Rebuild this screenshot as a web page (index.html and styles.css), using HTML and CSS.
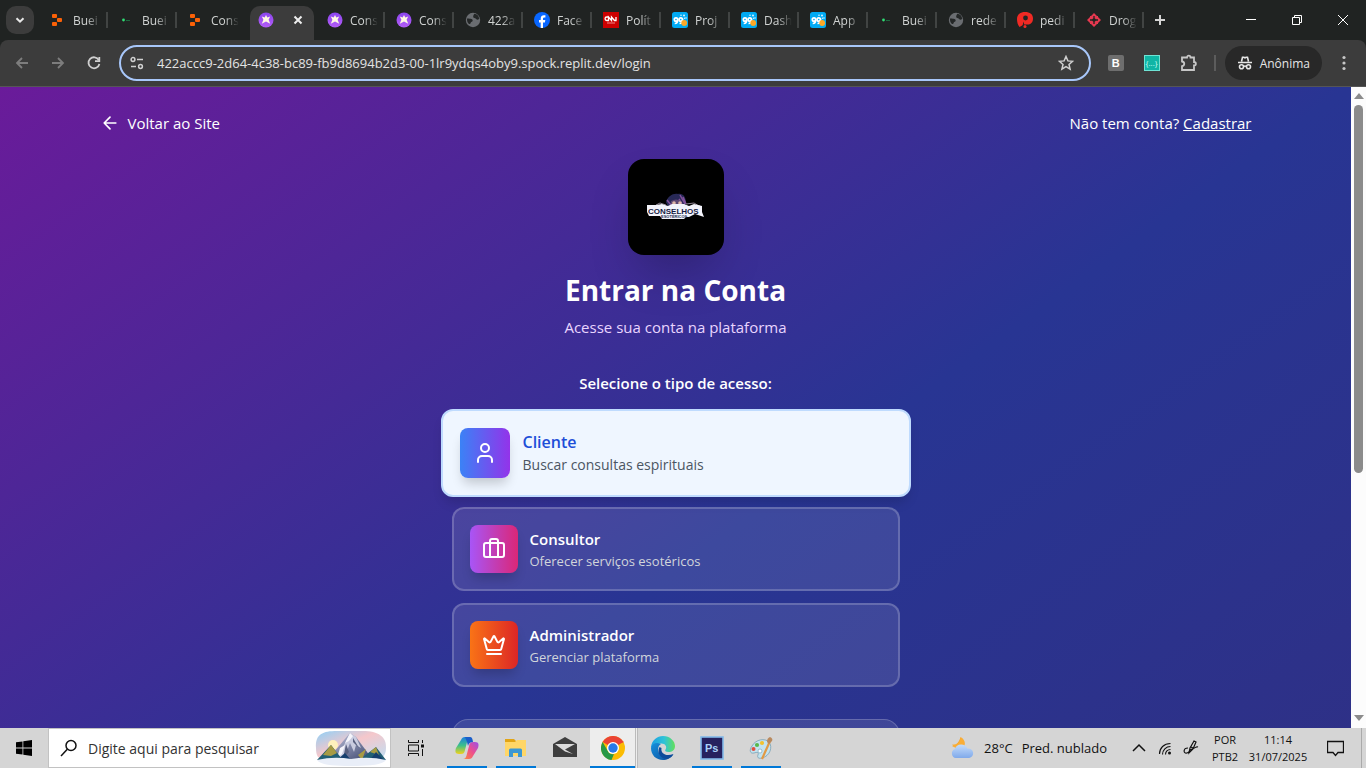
FILE: index.html
```html
<!DOCTYPE html>
<html lang="pt-BR">
<head>
<meta charset="utf-8">
<meta name="viewport" content="width=device-width, initial-scale=1">
<title>Entrar na Conta</title>
<link rel="stylesheet" href="styles.css">
</head>
<body>
<svg class="defs" aria-hidden="true">
  <defs>
    <linearGradient id="g-purple" x1="0" y1="0" x2="0" y2="1"><stop offset="0" stop-color="#8b45ee"/><stop offset="1" stop-color="#b35cf7"/></linearGradient>
    <linearGradient id="g-sky" x1="0" y1="0" x2="1" y2="1"><stop offset="0" stop-color="#8fd0f7"/><stop offset=".45" stop-color="#f5c7cb"/><stop offset="1" stop-color="#bfe0f5"/></linearGradient>
    <linearGradient id="g-rock" x1="0" y1="0" x2="1" y2="1"><stop offset="0" stop-color="#c9cbe4"/><stop offset="1" stop-color="#37426a"/></linearGradient>
    <linearGradient id="g-cop1" x1="0" y1="0" x2="0" y2="1"><stop offset="0" stop-color="#1b7fe0"/><stop offset=".5" stop-color="#3cc08a"/><stop offset="1" stop-color="#f2d21b"/></linearGradient>
    <linearGradient id="g-cop2" x1="1" y1="0" x2="0" y2="1"><stop offset="0" stop-color="#9b50e8"/><stop offset=".5" stop-color="#ee4f8c"/><stop offset="1" stop-color="#fb8a3c"/></linearGradient>
    <linearGradient id="g-edge1" x1="0" y1="0" x2="1" y2="0"><stop offset="0" stop-color="#1b9de2"/><stop offset=".55" stop-color="#2fc3d8"/><stop offset="1" stop-color="#63e05a"/></linearGradient>
    <linearGradient id="g-edge2" x1="0" y1="0" x2="1" y2="1"><stop offset="0" stop-color="#1690dc"/><stop offset="1" stop-color="#0b4f9e"/></linearGradient>
    <linearGradient id="g-cloud" x1="0" y1="0" x2="0" y2="1"><stop offset="0" stop-color="#c4dcfb"/><stop offset="1" stop-color="#7fa9ea"/></linearGradient>
    <symbol id="i-replit" viewBox="0 0 16 16"><g fill="#fb6107"><rect x="2" y="2" width="5" height="4" rx="1"/><rect x="7" y="6" width="5" height="4" rx="1"/><rect x="2" y="10" width="5" height="4" rx="1"/></g></symbol>
    <symbol id="i-dash" viewBox="0 0 16 16"><circle cx="4.500" cy="8" r="1.400" fill="#2fdc74"/><path d="M7 8.500h4" stroke="#1f6a3f" stroke-width="1"/></symbol>
    <symbol id="i-star" viewBox="0 0 16 16"><circle cx="8" cy="8" r="7.500" fill="url(#g-purple)"/><path d="M8 3 9.300 5.500 12.200 4.500 10.600 7.800 12.200 11.800 8 9.600 3.800 11.800 5.400 7.800 3.800 4.500 6.700 5.500z" fill="#fff8e4"/></symbol>
    <symbol id="i-globe" viewBox="0 0 16 16"><circle cx="8" cy="8" r="7.200" fill="#6a6d71"/><path d="M2 6.500c2.500.2 5.500 0 5.700 2 .1 1.400-1.700 1-2 2.300-.2 1-.8 1.500-1.700 1.200C2.500 11 1.800 8.500 2 6.500zM9.200 1.800c3 .3 4.600 2.200 5 5-1 1.300-2.500 1-3.300 0-.8-1-2.400-.5-2.700-1.800-.2-1.200.7-2 1-3.200z" fill="#242727"/></symbol>
    <symbol id="i-fb" viewBox="0 0 16 16"><circle cx="8" cy="8" r="8" fill="#0866ff"/><path d="M6.700 16v-5.500H5V8h1.700V6.800C6.700 4.300 7.900 3.200 10 3.200c.6 0 1.100.1 1.400.1v2.200h-1C9.300 5.500 9 6 9 7v1h2.300l-.4 2.500H9V16z" fill="#fff"/></symbol>
    <symbol id="i-cnn" viewBox="0 0 16 16"><rect width="16" height="16" fill="#c00"/><path d="M5 5H3.800a1.700 1.700 0 0 0 0 3.500H5.500V5l3 3.500V5l3 3.500h1.500V5" fill="none" stroke="#fff" stroke-width="1.300"/><path d="M4 11h8" stroke="#f08a8a"/></symbol>
    <symbol id="i-99" viewBox="0 0 16 16"><rect width="16" height="16" rx="2.500" fill="#00aaf4"/><g fill="none" stroke="#fff" stroke-width="1.700"><circle cx="4" cy="7.500" r="1.700"/><path d="M5.700 7.500c0 3-1 4-3 4"/><circle cx="8.800" cy="7.500" r="1.700"/><path d="M10.500 7.500c0 3-1 4-3 4"/></g><circle cx="12.200" cy="11" r="2.900" fill="#fca726"/><g fill="#d9f3ff"><circle cx="9" cy="3.200" r=".8"/><circle cx="12" cy="3.500" r="1"/><circle cx="14" cy="6" r=".8"/><circle cx="12.500" cy="6.300" r=".7"/></g></symbol>
    <symbol id="i-pede" viewBox="0 0 16 16"><path d="M8 0c5 0 8 2.300 8 6.500 0 4-2.500 6-5.500 6H7L2.500 15C.8 13 0 10 0 7 0 2.500 3.500 0 8 0z" fill="#f02a24"/><circle cx="8.500" cy="6" r="2.400" fill="#222524"/><path d="M6.500 9.500 5 16h3z" fill="#222524"/><circle cx="8" cy="14.500" r="1.500" fill="#f02a24"/></symbol>
    <symbol id="i-drog" viewBox="0 0 16 16"><path d="M8 1l3 3h1v1l3 3-3 3v1h-1l-3 3-3-3H4v-1L1 8l3-3V4h1z" fill="#e5384f"/><path d="M8 4v8M4 8h8" stroke="#202322" stroke-width="1.300"/><circle cx="8" cy="8" r="1.800" fill="#202322"/></symbol>
  </defs>
</svg>

<header class="browser">
  <nav class="tabstrip" aria-label="Abas">
    <button class="tab-search" aria-label="Pesquisar abas"><svg viewBox="0 0 12 12"><path d="M2.500 4.200 6 7.700l3.500-3.500"/></svg></button>
    <div class="tabs">
      <button class="tab"><svg><use href="#i-replit"/></svg><span>Buei</span></button>
      <button class="tab"><svg><use href="#i-dash"/></svg><span>Buei</span></button>
      <button class="tab tab-last"><svg><use href="#i-replit"/></svg><span>Cons</span></button>
      <button class="tab tab-active" aria-label="Conselhos, fechar aba"><svg><use href="#i-star"/></svg><svg class="close" viewBox="0 0 16 16"><path d="M4.500 4.500l7 7M11.500 4.500l-7 7"/></svg></button>
      <button class="tab"><svg><use href="#i-star"/></svg><span>Cons</span></button>
      <button class="tab"><svg><use href="#i-star"/></svg><span>Cons</span></button>
      <button class="tab"><svg><use href="#i-globe"/></svg><span>422a</span></button>
      <button class="tab"><svg><use href="#i-fb"/></svg><span>Face</span></button>
      <button class="tab"><svg><use href="#i-cnn"/></svg><span>Polít</span></button>
      <button class="tab"><svg><use href="#i-99"/></svg><span>Proj</span></button>
      <button class="tab"><svg><use href="#i-99"/></svg><span>Dash</span></button>
      <button class="tab"><svg><use href="#i-99"/></svg><span>App</span></button>
      <button class="tab"><svg><use href="#i-dash"/></svg><span>Buei</span></button>
      <button class="tab"><svg><use href="#i-globe"/></svg><span>rede</span></button>
      <button class="tab"><svg><use href="#i-pede"/></svg><span>pedi</span></button>
      <button class="tab"><svg><use href="#i-drog"/></svg><span>Drog</span></button>
    </div>
    <button class="new-tab" aria-label="Nova aba"><svg viewBox="0 0 16 16"><path d="M8 3v10M3 8h10"/></svg></button>
    <div class="window-controls">
      <button aria-label="Minimizar"><svg viewBox="0 0 12 12"><path d="M1 5.500h10"/></svg></button>
      <button aria-label="Restaurar"><svg viewBox="0 0 12 12"><path d="M1.500 3.500h7v7h-7zM3.500 3.500v-2h7v7h-2"/></svg></button>
      <button aria-label="Fechar"><svg viewBox="0 0 12 12"><path d="M1 1l10 10M11 1 1 11"/></svg></button>
    </div>
  </nav>
  <div class="toolbar">
    <button class="nav-button dim" aria-label="Voltar"><svg viewBox="0 0 16 16"><path d="M14 8H3M8 3 3 8l5 5"/></svg></button>
    <button class="nav-button dim" aria-label="Avançar"><svg viewBox="0 0 16 16"><path d="M2 8h11M8 3l5 5-5 5"/></svg></button>
    <button class="nav-button" aria-label="Recarregar"><svg viewBox="0 0 16 16"><path d="M12.800 5A5.500 5.500 0 1 0 13.400 9"/><path d="M13.300 2v4.200H9"/></svg></button>
    <label class="address">
      <svg class="site-icon" viewBox="0 0 16 16"><circle cx="4" cy="4.500" r="1.900"/><path d="M8 4.500h6M2 11.500h5"/><circle cx="11.500" cy="11.500" r="1.900"/></svg>
      <input type="text" aria-label="Endereço" value="422accc9-2d64-4c38-bc89-fb9d8694b2d3-00-1lr9ydqs4oby9.spock.replit.dev/login">
      <svg class="site-icon" viewBox="0 0 16 16"><path d="M8 1.500l1.900 4.400 4.700.4-3.600 3.100 1.100 4.700L8 11.600l-4.100 2.500L5 9.400 1.400 6.300l4.700-.4z"/></svg>
    </label>
    <button class="ext ext-b" aria-label="Extensão B">B</button>
    <button class="ext ext-code" aria-label="Extensão de código">{...}</button>
    <button class="ext" aria-label="Extensões"><svg viewBox="0 0 18 18"><path d="M2 3.500h5c0-2.500 3.500-2.500 3.500 0H14V8c2.500 0 2.500 3.500 0 3.500V16H2v-3.800c3-.3 3-4.400 0-4.700z"/></svg></button>
    <span class="divider"></span>
    <button class="incognito"><svg viewBox="0 0 16 16"><path d="M4.500 6.500 5.500 2.200h1.200L8 2.800l1.300-.6h1.200l1 4.300M1 7.500h14"/><circle cx="4.500" cy="11.700" r="2"/><circle cx="11.500" cy="11.700" r="2"/><path d="M6.500 11.500q1.500-1 3 0"/></svg>Anônima</button>
    <button class="menu" aria-label="Menu"><svg viewBox="0 0 4 16"><circle cx="2" cy="2.500" r="1.600"/><circle cx="2" cy="8" r="1.600"/><circle cx="2" cy="13.500" r="1.600"/></svg></button>
  </div>
</header>

<div class="viewport">
  <div class="page-scroll">
    <div class="page">
      <div class="topbar">
        <a class="back" href="#"><svg viewBox="0 0 24 24"><path d="M12 19l-7-7 7-7M19 12H5"/></svg>Voltar ao Site</a>
        <p>Não tem conta? <a href="#">Cadastrar</a></p>
      </div>
      <main class="login">
        <div class="logo">
          <svg viewBox="0 0 96 96" role="img" aria-label="Conselhos Esotéricos">
            <path d="M38 43c2-6 7-9 12-8 5-1 8 3 8 9l-4 6H41z" fill="#282957"/>
            <path d="M39 41l4 5M52 36l5 9M55 38l3 7M51 40l3 5" stroke="#815099" stroke-width="1.500"/>
            <path d="M43 42q5-3 10 0v5H43z" fill="#5c4672"/>
            <circle cx="46" cy="44" r="1.800" fill="#e0b7a9"/><circle cx="52" cy="44" r="1.800" fill="#e0b7a9"/>
            <path d="M38 46l-6-2-4 2M58 45l8-1 5 3M71 46l2 5" fill="none" stroke="#8c8290" stroke-width="1"/>
            <path d="M19 46h9l6-1 6 2 4-2h12l5 2 5-2 8 2v6l2 5-9-3-6 3h-3l-2 2H34l-2-3H21l-2-4z" fill="#f3f3fb"/>
            <text class="logo-text" x="20" y="55">CONSELHOS</text>
            <text class="logo-subtext" x="33" y="59">ESOTÉRICOS</text>
          </svg>
        </div>
        <h1>Entrar na Conta</h1>
        <p class="subtitle">Acesse sua conta na plataforma</p>
        <h2>Selecione o tipo de acesso:</h2>
        <div class="roles">
          <button class="role role-selected">
            <span class="role-icon blue"><svg viewBox="0 0 24 24"><path d="M19 21v-2a4 4 0 0 0-4-4H9a4 4 0 0 0-4 4v2"/><circle cx="12" cy="7" r="4"/></svg></span>
            <span class="role-text"><strong>Cliente</strong><span>Buscar consultas espirituais</span></span>
          </button>
          <button class="role">
            <span class="role-icon pink"><svg viewBox="0 0 24 24"><path d="M16 20V4a2 2 0 0 0-2-2h-4a2 2 0 0 0-2 2v16"/><rect x="2" y="6" width="20" height="14" rx="2"/></svg></span>
            <span class="role-text"><strong>Consultor</strong><span>Oferecer serviços esotéricos</span></span>
          </button>
          <button class="role">
            <span class="role-icon orange"><svg viewBox="0 0 24 24"><path d="M11.562 3.266a.5.5 0 0 1 .876 0L15.390 8.870a1 1 0 0 0 1.516.294L21.183 5.500a.5.5 0 0 1 .798.519l-2.834 10.246a1 1 0 0 1-.956.734H5.810a1 1 0 0 1-.957-.734L2.020 6.020a.5.5 0 0 1 .798-.519l4.276 3.664a1 1 0 0 0 1.516-.294zM5 21h14"/></svg></span>
            <span class="role-text"><strong>Administrador</strong><span>Gerenciar plataforma</span></span>
          </button>
        </div>
        <section class="form-card"></section>
      </main>
    </div>
  </div>
  <div class="scrollbar" aria-hidden="true">
    <svg viewBox="0 0 10 6"><path d="M0 6 5 0l5 6z"/></svg>
    <div class="track"><div class="thumb"></div></div>
    <svg viewBox="0 0 10 6"><path d="M0 0l5 6 5-6z"/></svg>
  </div>
</div>

<footer class="taskbar">
  <button class="start" aria-label="Iniciar"><svg viewBox="0 0 16 16"><path d="M0 2.300 6.500 1.400v6.200H0zM7.300 1.300 16 0v7.600H7.300zM0 8.400h6.500v6.200L0 13.700zM7.300 8.400H16V16l-8.700-1.300z"/></svg></button>
  <label class="search">
    <svg class="lens" viewBox="0 0 18 18"><circle cx="11" cy="6.500" r="5"/><path d="M7.300 10.200 1 17"/></svg>
    <input type="text" aria-label="Pesquisar" placeholder="Digite aqui para pesquisar">
    <svg class="mountain" viewBox="0 0 72 37">
      <path d="M1 18C0 4 8 1 22 1l22 0C62 0 72 6 71 18c0 8-4 11-12 12H10C3 29 1 26 1 18z" fill="url(#g-sky)"/>
      <circle cx="18" cy="15" r="5" fill="#fff1bd"/>
      <path d="M12 30 35 3l6 4 17 23z" fill="url(#g-rock)"/>
      <path d="M35 3l6 4 5 11-5-3-2 7-4-9-5 13-8 4 8-17z" fill="#c9cce0"/>
      <path d="M35 3l3 3-4 5-4 2zM30 15l-3 9-5 4 3-10z" fill="#f5f5fb"/>
      <path d="M31 14l3 8-6 7zM38 8l6 10-6-6z" fill="#59607f"/>
      <path d="M2 30l14-15 11 14zM44 30l17-13 10 13z" fill="#225f74"/>
      <path d="M8 25l8-10 6 8-6 3zM43 25l8-6-4 11zM55 22l6-5 3 8z" fill="#a79b43"/>
      <path d="M22 30l8-7 6 7zM55 30l6-8 9 9z" fill="#163f6e"/>
      <path d="M2 30q17-4 34-1 18-3 35 1c-3 5-18 6-35 6S5 35 2 30z" fill="#e9eef8"/>
    </svg>
  </label>
  <button class="task-view" aria-label="Visão de tarefas"><svg viewBox="0 0 16 16"><path d="M.5 0v2.500h10V0M.5 5h10v6H.5zM.5 16v-2.500h10V16M14.500 0v3M14.500 9v7"/><path d="M13 4.500h3v3h-3z" fill="#111" stroke="none"/></svg></button>
  <div class="apps">
    <button class="app running" aria-label="Copilot"><svg viewBox="0 0 24 24"><path d="M6 4c.8-2 2-3 4-3h6c-2 0-2.700 1-3.400 3L10 14c-.7 3-1.500 4-4 4H4c-4 0-4-3-3-6z" fill="url(#g-cop1)"/><path d="M18 20c-.8 2-2 3-4 3H8c2 0 2.700-1 3.400-3L14 10c.7-3 1.500-4 4-4h2c4 0 4 3 3 6z" fill="url(#g-cop2)"/><path d="M10 1h5c2 0 2.500 1.500 3 5-3 0-4 1-5 4l-1-4z" fill="#1b5ec9"/></svg></button>
    <button class="app running" aria-label="Explorador"><svg viewBox="0 0 24 24"><path d="M1 3h9l2 2h10v15H1z" fill="#e2a516"/><path d="M1 6h10l2-2h9v16H1z" fill="#ffd667"/><path d="M5 20v-6q0-1.500 1.500-1.500h10q1.500 0 1.500 1.500v7h-4v-4H9v4H5z" fill="#3c97d3"/></svg></button>
    <button class="app" aria-label="E-mail"><svg viewBox="0 0 24 24"><path d="M0 8 12 1l12 7v13H0z" fill="#3e3e3e"/><path d="M2 8h20l-10 5.500 8 4.500-8-2.500z" fill="#dadada"/></svg></button>
    <button class="app running current" aria-label="Chrome"><svg viewBox="0 0 24 24"><circle cx="12" cy="12" r="12" fill="#fbbc04"/><path d="M12 12 1.600 6A12 12 0 0 1 22.400 6z" fill="#ea4335"/><path d="M12 6h10.400" stroke="#ea4335"/><path d="M1.600 6 6.800 15q2 4 6.200 3l-2.500 6A12 12 0 0 1 1.600 6z" fill="#279847"/><circle cx="12" cy="12" r="6" fill="#fff"/><circle cx="12" cy="12" r="4.700" fill="#2878e8"/></svg></button>
    <button class="app" aria-label="Edge"><svg viewBox="0 0 24 24"><path d="M0 11C1 4 6 0 12 0c7 0 12 5 12 10 0 4-3 6-6.500 6-3 0-4-1-3-2.500 2-3-.5-6-4-6C5 7.500 1 9 0 13z" fill="url(#g-edge1)"/><path d="M0 12c1-5 6-6 10-4-4 2-4 9 1 12 4 2 8 1 11-1.500C20 22 16 24 12 24 5 24 0 19 0 12z" fill="url(#g-edge2)"/><path d="M8.500 11c-3 6 1 12 8 12 3-1 5-3 6-5-8 3-13-1-12-6z" fill="#0d4c9b"/></svg></button>
    <button class="app running" aria-label="Photoshop"><svg viewBox="0 0 24 24"><rect x="1" y="1" width="22" height="22" fill="#26215f" stroke="#83b9e9" stroke-width="1.600"/><text x="5" y="16">Ps</text></svg></button>
    <button class="app running" aria-label="Paint"><svg viewBox="0 0 24 24"><path d="M3 10C7 3 16 2 20 6c4 5 1 14-7 16-4 1-5-1-4-3 1-3-1-3-4-2-4 1-5-3-2-7z" fill="#c3e3ef" stroke="#6d98ae" stroke-width=".7"/><circle cx="4.500" cy="13" r="2" fill="#e14e3f"/><circle cx="8" cy="9" r="2.100" fill="#59b84d"/><circle cx="13" cy="7" r="2.100" fill="#f2c22f"/><circle cx="11" cy="15" r="2" fill="#fff" stroke="#6d98ae" stroke-width=".6"/><path d="M21 5 13 23" stroke="#e29a45" stroke-width="2.200"/><path d="M18 6c0-3 1-4 3-5 2 1 3 2 2 4l-3 3z" fill="#b9895d"/></svg></button>
  </div>
  <div class="tray">
    <button class="weather"><svg viewBox="0 0 26 24"><path d="M11 1c3 6 0 12-9 10 3-1 7-3 9-10z" fill="#f7a52a"/><path d="M11 1c6 3 6 11 0 12H6L2 9c6 0 9-3 9-8z" fill="#f9ad36"/><path d="M6 23a5 5 0 0 1-1-9.500 7 7 0 0 1 13-.5 5 5 0 0 1 2 10z" fill="url(#g-cloud)"/></svg><span>28°C</span><span>Pred. nublado</span></button>
    <div class="tray-icons">
      <button aria-label="Ícones ocultos"><svg viewBox="0 0 16 16"><path d="M2 11l6-6 6 6"/></svg></button>
      <button aria-label="Rede"><svg viewBox="0 0 16 16"><path d="M2.500 14C2.500 8 7 3.500 13.500 3.500M5.500 14.500C5.500 10 9 6.500 13.500 6.500M8.500 14.500C8.500 11.500 10.500 9.500 13.500 9.500" stroke-width="1.100"/><circle cx="12.500" cy="13" r="1.500" fill="#111" stroke="none"/></svg></button>
      <button aria-label="Caneta"><svg viewBox="0 0 16 16"><path d="M5 8c-5 0-5 6-1 5s1-3 5-4 4-3 6-2M6 13l1-5 4-7 2 1-3 7zM8 7l2 1" stroke-width="1.200"/></svg></button>
    </div>
    <button class="two-lines language"><span>POR</span><span>PTB2</span></button>
    <button class="two-lines clock"><span>11:14</span><span>31/07/2025</span></button>
    <button class="notice" aria-label="Notificações"><svg viewBox="0 0 17 17"><path d="M.5 1.500h16v11H11L8.500 15.500 6 12.500H.5z"/></svg></button>
  </div>
</footer>
</body>
</html>
```

FILE: styles.css
```css
* { box-sizing: border-box; margin: 0; }

body {
  height: 100vh;
  display: flex;
  flex-direction: column;
  overflow: hidden;
  font-family: "Open Sans", "Noto Sans", sans-serif;
  font-size: 15px;
  color: #fff;
}

button, input {
  font: inherit;
  color: inherit;
  background: none;
  border: 0;
  padding: 0;
  outline: 0;
}

svg { display: block; flex: none; }
.defs { position: absolute; width: 0; height: 0; }

/* Browser chrome */
.browser { flex: none; background: #202322; font-size: 12px; }

.tabstrip { display: flex; align-items: center; height: 40px; padding-left: 6px; }

.tab-search {
  display: grid;
  place-items: center;
  width: 28px;
  height: 28px;
  border-radius: 10px;
  background: #3c3c3c;
}
.tab-search svg { width: 12px; fill: none; stroke: #e8e8e8; stroke-width: 2; }

.tabs { display: flex; align-items: flex-end; align-self: stretch; padding-left: 5px; }

.tab {
  position: relative;
  display: flex;
  align-items: center;
  gap: 7px;
  width: 69px;
  height: 34px;
  padding: 0 0 6px 11px;
  color: #d0d3d2;
}
.tab::after {
  content: "";
  position: absolute;
  right: 0;
  top: 6px;
  width: 2px;
  height: 16px;
  background: #414443;
}
.tab-last::after, .tab-active::after { display: none; }
.tab svg { width: 16px; height: 16px; }
.tab span {
  width: 28px;
  overflow: hidden;
  white-space: nowrap;
  text-align: left;
  mask-image: linear-gradient(90deg, #000 50%, transparent);
}
.tab-active {
  width: 64px;
  margin: 0 2px 0 4px;
  padding: 0 8px 6px;
  justify-content: space-between;
  border-radius: 10px 10px 0 0;
  background: #3c3c3c;
}
.tab-active .close { fill: none; stroke: #eee; stroke-width: 2; }

.new-tab { width: 32px; display: grid; place-items: center; }
.new-tab svg { width: 16px; fill: none; stroke: #d5d5d5; stroke-width: 2; }

.window-controls { display: flex; margin-left: auto; }
.window-controls button { width: 46px; display: grid; place-items: center; }
.window-controls svg { width: 12px; fill: none; stroke: #fff; }

.toolbar {
  display: flex;
  align-items: center;
  height: 47px;
  padding: 0 12px 0 4px;
  border-radius: 8px 8px 0 0;
  border-bottom: 1px solid #555;
  background: #3c3c3c;
}
.nav-button { width: 36px; display: grid; place-items: center; }
.nav-button svg, .site-icon { width: 16px; fill: none; stroke: #d0d0d0; stroke-width: 1.8; }
.nav-button.dim svg { stroke: #7d7d7d; }
.address .site-icon { stroke-width: 1.5; }

.address {
  flex: 1;
  display: flex;
  align-items: center;
  gap: 12px;
  height: 36px;
  margin-left: 7px;
  padding: 0 15px 0 8px;
  border: 2px solid #a8c7fa;
  border-radius: 18px;
}
.address input { flex: 1; min-width: 0; font-size: 13px; color: #e3e3e3; }

.ext { width: 16px; height: 16px; margin-left: 20px; display: grid; place-items: center; }
.ext-b { margin-left: 17px; background: #6e6e6e; border-radius: 2px; font: bold 11px "Liberation Sans", sans-serif; color: #fff; }
.ext-code { background: #10b5a5; border: 1px solid #6fe3d4; font-size: 8px; line-height: 8px; color: #c8fff7; }
.ext svg { width: 18px; fill: none; stroke: #c7c7c7; stroke-width: 1.8; }

.divider { width: 2px; height: 16px; margin: 0 9px 0 18px; background: #5c5c5c; }
.incognito {
  display: flex;
  align-items: center;
  gap: 7px;
  height: 34px;
  padding: 0 12px;
  border-radius: 17px;
  background: #282828;
  color: #e6e6e6;
}
.incognito svg { width: 16px; fill: none; stroke: #e6e6e6; stroke-width: 1.6; }
.menu { width: 20px; margin-left: 12px; display: grid; place-items: center; }
.menu svg { width: 4px; fill: #c7c7c7; }

/* Page area */
.viewport { flex: 1; min-height: 0; display: flex; }
.page-scroll { flex: 1; overflow: hidden; }
.page {
  padding-bottom: 32px;
  background: linear-gradient(to bottom right, #6a1b9a, #283593, #312e81);
}

.topbar {
  display: flex;
  justify-content: space-between;
  align-items: center;
  max-width: 1152px;
  margin: 0 auto;
  padding: 24px 0;
  line-height: 24px;
}
.topbar a { color: #fff; }
.back { display: flex; align-items: center; gap: 8px; text-decoration: none; }
.back svg { width: 20px; fill: none; stroke: #fff; stroke-width: 2; stroke-linecap: round; stroke-linejoin: round; }

.login { max-width: 448px; margin: 0 auto; text-align: center; }

.logo {
  width: 96px;
  height: 96px;
  margin: 0 auto 16px;
  border-radius: 16px;
  background: #000;
  box-shadow: 0 24px 48px -12px rgba(0, 0, 0, .25);
}
.logo-text { font: bold 8px "Liberation Sans", sans-serif; fill: #151b42; }
.logo-subtext { font: bold 4px "Liberation Sans", sans-serif; fill: #202d55; }

h1 { font-size: 28px; line-height: 38px; font-weight: 700; }
.subtitle { margin-top: 6px; line-height: 24px; color: #e9d5ff; }
h2 { margin: 32px 0 16px; font-size: 15px; line-height: 24px; font-weight: 600; }

.roles { display: grid; gap: 12px; }
.role {
  display: flex;
  align-items: center;
  gap: 12px;
  height: 84px;
  padding: 16px;
  border: 2px solid rgba(255, 255, 255, .2);
  border-radius: 12px;
  background: rgba(255, 255, 255, .1);
  text-align: left;
}
.role-icon {
  display: grid;
  place-items: center;
  flex: none;
  width: 48px;
  height: 48px;
  border-radius: 8px;
  box-shadow: 0 8px 12px -3px rgba(0, 0, 0, .2);
}
.role-icon svg { width: 24px; fill: none; stroke: #fff; stroke-width: 2; stroke-linecap: round; stroke-linejoin: round; }
.blue { background: linear-gradient(90deg, #3b82f6, #9333ea); }
.pink { background: linear-gradient(90deg, #a855f7, #db2777); }
.orange { background: linear-gradient(90deg, #f97316, #dc2626); }

.role-text { display: grid; }
.role-text strong { font-size: 15px; line-height: 24px; font-weight: 600; }
.role-text span { font-size: 13px; line-height: 20px; color: #d1d5db; }

/* The chosen card stands slightly larger than its neighbours */
.role-selected {
  gap: 13px;
  height: 88px;
  margin: -2px -11px;
  padding: 17px;
  border-color: #bfdbfe;
  background: #eff6ff;
  box-shadow: 0 8px 12px -3px rgba(0, 0, 0, .15);
}
.role-selected .role-icon { width: 50px; height: 50px; }
.role-selected strong { font-size: 16px; color: #1d4ed8; }
.role-selected .role-text span { font-size: 14px; line-height: 22px; color: #4b5563; }

.form-card {
  min-height: 303px;
  margin-top: 32px;
  border: 1px solid rgba(255, 255, 255, .2);
  border-radius: 16px;
  background: rgba(255, 255, 255, .1);
}

.scrollbar {
  display: flex;
  flex-direction: column;
  align-items: center;
  gap: 6px;
  width: 15px;
  padding: 6px 0 7px;
  background: #fcfcfc;
}
.scrollbar svg { width: 10px; fill: #8b8b8b; }
.track { flex: 1; width: 9px; }
.thumb { height: 61%; border-radius: 5px; background: #8b8b8b; }

/* Taskbar */
.taskbar {
  flex: none;
  display: flex;
  align-items: stretch;
  height: 40px;
  background: #d5d5d5;
  color: #111;
}
.start { width: 48px; display: grid; place-items: center; }
.start svg { width: 16px; }
.search {
  display: flex;
  align-items: center;
  gap: 10px;
  width: 343px;
  padding: 0 3px 0 11px;
  border: 1px solid #c2c2c2;
  background: #fff;
}
.search input { flex: 1; min-width: 0; font-size: 14px; }
.search input::placeholder { color: #333; opacity: 1; }
.lens { width: 18px; fill: none; stroke: #111; stroke-width: 1.5; }
.mountain { width: 72px; }
.task-view { width: 50px; display: grid; place-items: center; }
.task-view svg { width: 16px; fill: none; stroke: #111; }

.apps { display: flex; gap: 1px; padding-left: 2px; }
.app { position: relative; width: 48px; display: grid; place-items: center; }
.app svg { width: 24px; }
.app text { font: bold 11px "Liberation Sans", sans-serif; fill: #a9d1fa; }
.running::after {
  content: "";
  position: absolute;
  left: 4px;
  right: 4px;
  bottom: 0;
  height: 2px;
  background: #0078d7;
}
.current { background: #ededed; border-right: 3px double #bbb; }
.current::after { left: 0; right: 0; }

.tray { display: flex; align-items: center; margin-left: auto; padding-right: 4px; }
.weather { display: flex; align-items: center; gap: 9px; font-size: 13px; }
.weather svg { width: 25px; }
.tray-icons { display: flex; gap: 10px; margin: 0 11px 0 24px; }
.tray-icons svg { width: 16px; fill: none; stroke: #111; stroke-width: 1.5; }
.two-lines { display: grid; font-size: 11px; line-height: 17px; text-align: center; }
.language { width: 30px; margin-right: 7px; }
.clock { width: 62px; }
.notice { width: 53px; height: 40px; display: grid; place-items: center; border-right: 1px solid #aaa; }
.notice svg { width: 17px; fill: none; stroke: #111; stroke-width: 1.3; }
```
